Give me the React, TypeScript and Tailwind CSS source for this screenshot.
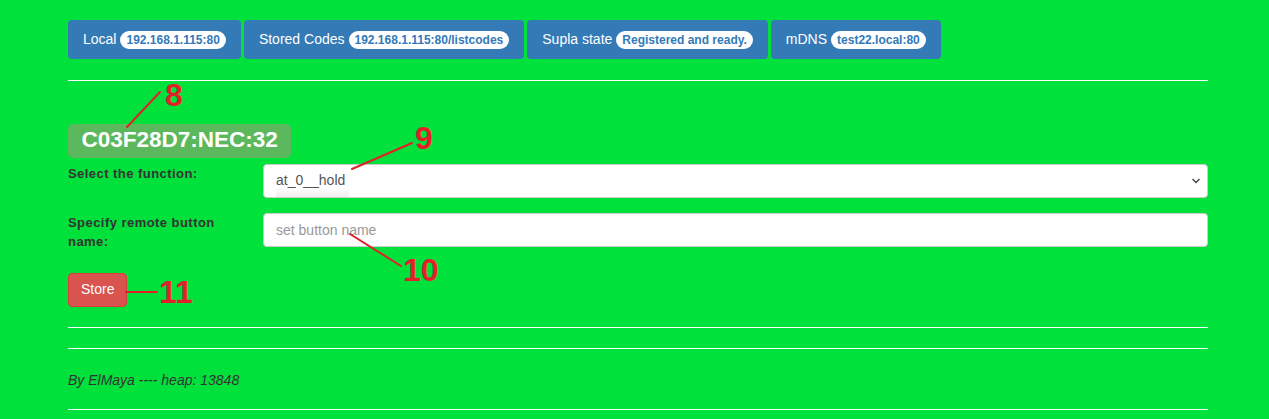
import { ChevronDown } from "lucide-react";

const links = [
  { label: "Local", badge: "192.168.1.115:80" },
  { label: "Stored Codes", badge: "192.168.1.115:80/listcodes" },
  { label: "Supla state", badge: "Registered and ready." },
  { label: "mDNS", badge: "test22.local:80" },
];

function Callout({ n, className }: { n: string; className: string }) {
  return (
    <div
      className={`absolute text-[32px] leading-[32px] font-bold text-[#e3202a] ${className}`}
    >
      {n}
    </div>
  );
}

export default function App() {
  return (
    <main className="relative min-h-screen bg-[#00e13c] font-['Liberation_Sans',Arial,sans-serif] text-[14px] text-[#333]">
      <div className="ml-[68px] w-[1140px] pt-5 pb-2">
        <div className="flex gap-[3px]">
          {links.map((l) => (
            <button
              key={l.label}
              className="flex h-[39px] items-center gap-1 rounded bg-[#337ab7] px-[15px] text-[14px] text-white"
            >
              {l.label}
              <span className="flex h-[18px] items-center rounded-[10px] bg-white px-[6px] text-[12px] font-bold text-[#337ab7]">
                {l.badge}
              </span>
            </button>
          ))}
        </div>

        <hr className="mt-[21px] border-0 border-t border-white" />

        <div className="mt-[43px] flex">
          <span className="rounded-[5px] bg-[#5cb85c] px-[13.5px] pt-[4.5px] pb-[6.75px] text-[22.5px] leading-[22.5px] font-bold text-white">
            C03F28D7:NEC:32
          </span>
        </div>

        <form className="mt-[6px]">
          <div className="mb-[15px] flex">
            <label className="w-[195px] text-[13px] leading-[19px] font-bold tracking-[0.45px] text-[#333]">
              Select the function:
            </label>
            <div className="relative flex h-[34px] flex-1 items-center rounded border border-[#ccc] bg-white pl-[12px] text-[#555]">
              <span className="flex h-full items-center bg-gradient-to-b from-white from-70% to-[#eeeeee] pr-1">
                at_0__hold
              </span>
              <ChevronDown
                size={12}
                strokeWidth={3.5}
                className="absolute right-[5px] text-[#555]"
              />
            </div>
          </div>

          <div className="mb-[22px] flex">
            <label className="w-[195px] pr-[30px] text-[13px] leading-[19px] font-bold tracking-[0.45px] text-[#333]">
              Specify remote button name:
            </label>
            <input
              placeholder="set button name"
              className="h-[34px] flex-1 rounded border border-[#ccc] bg-white px-[12px] text-[14px] text-[#555] placeholder:text-[#999]"
            />
          </div>

          <button
            type="button"
            className="h-[34px] rounded border border-[#d43f3a] bg-[#d9534f] px-[12px] text-[14px] text-white"
          >
            Store
          </button>
        </form>

        <hr className="mt-[20px] border-0 border-t border-white" />
        <hr className="mt-[20px] border-0 border-t border-white" />

        <p className="mt-[21px] leading-[20px] italic text-[#333]">
          By ElMaya ---- heap: 13848
        </p>

        <hr className="mt-[19px] border-0 border-t border-white" />
      </div>

      <svg
        className="pointer-events-none absolute top-0 left-0"
        width="1269"
        height="419"
      >
        <g stroke="#e3202a" strokeWidth="2" strokeLinecap="round">
          <line x1="127" y1="127" x2="160" y2="92" />
          <line x1="352" y1="169" x2="412" y2="143" />
          <line x1="350" y1="234" x2="401" y2="266" />
          <line x1="126" y1="292" x2="157" y2="292" />
        </g>
      </svg>
      <Callout n="8" className="top-[79px] left-[165px]" />
      <Callout n="9" className="top-[122px] left-[415px]" />
      <Callout n="10" className="top-[254px] left-[403px]" />
      <Callout n="11" className="top-[276px] left-[159px]" />
    </main>
  );
}
